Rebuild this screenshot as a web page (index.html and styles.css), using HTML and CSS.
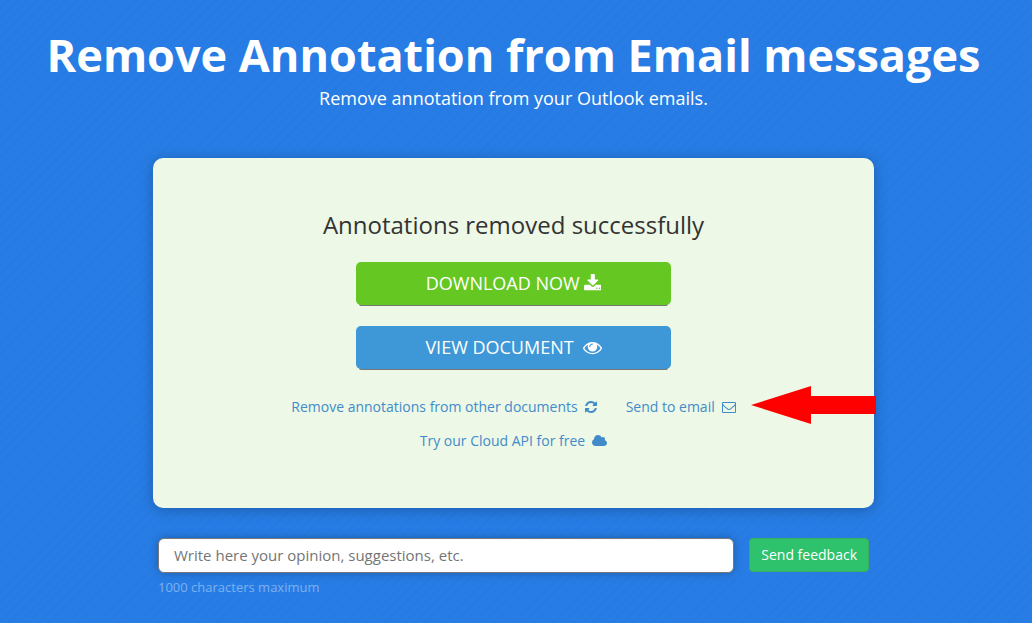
FILE: index.html
```html
<!DOCTYPE html>
<html lang="en">
<head>
<meta charset="utf-8">
<meta name="viewport" content="width=device-width, initial-scale=1">
<title>Remove Annotation from Email messages</title>
<link rel="stylesheet" href="styles.css">
</head>
<body>
<main class="page">
  <header class="intro">
    <h1 class="title">Remove Annotation from Email messages</h1>
    <p class="subtitle">Remove annotation from your Outlook emails.</p>
  </header>
  <section class="panel">
    <h2 class="status">Annotations removed successfully</h2>
    <div class="actions">
      <button class="action download" type="button"><span>DOWNLOAD NOW</span><svg class="icon-download" viewBox="64 0 1664 1792" aria-hidden="true"><path d="M1344 1344q0-26-19-45t-45-19-45 19-19 45 19 45 45 19 45-19 19-45zm256 0q0-26-19-45t-45-19-45 19-19 45 19 45 45 19 45-19 19-45zm128-224v320q0 40-28 68t-68 28h-1472q-40 0-68-28t-28-68v-320q0-40 28-68t68-28h465l135 136q58 56 136 56t136-56l136-136h464q40 0 68 28t28 68zm-325-569q17 41-14 70l-448 448q-18 19-45 19t-45-19l-448-448q-31-29-14-70 17-39 59-39h256v-448q0-26 19-45t45-19h256q26 0 45 19t19 45v448h256q42 0 59 39z"/></svg></button>
      <button class="action view" type="button"><span>VIEW DOCUMENT</span><svg class="icon-eye" viewBox="0 0 1792 1792" aria-hidden="true"><path d="M1664 960q-152-236-381-353 61 104 61 225 0 185-131.500 316.500t-316.500 131.500-316.500-131.500-131.500-316.500q0-121 61-225-229 117-381 353 133 205 333.500 326.500t434.500 121.500 434.500-121.500 333.500-326.500zm-720-384q0-20-14-34t-34-14q-125 0-214.500 89.500t-89.500 214.500q0 20 14 34t34 14 34-14 14-34q0-86 61-147t147-61q20 0 34-14t14-34zm848 384q0 34-20 69-140 230-376.500 368.500t-499.500 138.500-499.500-139-376.500-368q-20-35-20-69t20-69q140-229 376.500-368t499.500-139 499.500 139 376.500 368q20 35 20 69z"/></svg></button>
    </div>
    <nav class="links">
      <a class="link" href="#again">Remove annotations from other documents<svg class="icon-refresh" viewBox="128 0 1536 1792" aria-hidden="true"><path d="M1639 1056q0 5-1 7-64 268-268 434.500t-478 166.500q-146 0-282.500-55t-243.500-157l-129 129q-19 19-45 19t-45-19-19-45v-448q0-26 19-45t45-19h448q26 0 45 19t19 45-19 45l-137 137q71 66 161 102t187 36q134 0 250-65t186-179q11-17 53-117 8-23 30-23h192q13 0 22.500 9.500t9.500 22.500zm25-800v448q0 26-19 45t-45 19h-448q-26 0-45-19t-19-45 19-45l138-138q-148-137-349-137-134 0-250 65t-186 179q-11 17-53 117-8 23-30 23h-199q-13 0-22.500-9.500t-9.500-22.500v-7q65-268 270-434.500t480-166.500q146 0 284 55.500t245 156.500l130-129q19-19 45-19t45 19 19 45z"/></svg></a>
      <a class="link" href="#email">Send to email<svg class="icon-mail" viewBox="0 0 1792 1792" aria-hidden="true"><path d="M1664 1504v-768q-32 36-69 66-268 206-426 338-51 43-83 67t-86.500 48.500-102.500 24.500h-2q-48 0-102.500-24.500t-86.500-48.500-83-67q-158-132-426-338-37-30-69-66v768q0 13 9.500 22.500t22.500 9.500h1472q13 0 22.500-9.500t9.500-22.500zm0-1051v-24.500l-.5-13-3-12.500-5.500-9-9-7.500-14-2.500h-1472q-13 0-22.500 9.500t-9.500 22.500q0 168 147 284 193 152 401 317 6 5 35 29.500t46 37.500 44.500 31.500 50.500 27.500 43 9h2q20 0 43-9t50.500-27.500 44.500-31.500 46-37.500 35-29.500q208-165 401-317 54-43 100.500-115.500t46.500-131.500zm128-37v1088q0 66-47 113t-113 47h-1472q-66 0-113-47t-47-113v-1088q0-66 47-113t113-47h1472q66 0 113 47t47 113z"/></svg></a>
      <a class="link" href="#api">Try our Cloud API for free<svg class="icon-cloud" viewBox="0 0 1920 1792" aria-hidden="true"><path d="M1920 1152q0 159-112.500 271.500t-271.500 112.500h-1088q-185 0-316.500-131.500t-131.500-316.500q0-132 71-241.500t187-163.500q-2-28-2-43 0-212 150-362t362-150q158 0 286.500 88t187.500 230q70-62 166-62 106 0 181 75t75 181q0 75-41 138 129 30 213 134.500t84 239.500z"/></svg></a>
    </nav>
    <svg class="pointer" viewBox="0 0 125 38" aria-hidden="true"><path d="M0 19 60 0V10H125V28H60V38Z"/></svg>
  </section>
  <form class="feedback">
    <div class="field">
      <input class="opinion" type="text" maxlength="1000" placeholder="Write here your opinion, suggestions, etc." aria-label="Your feedback" aria-describedby="limit">
      <span class="hint" id="limit">1000 characters maximum</span>
    </div>
    <button class="send" type="button">Send feedback</button>
  </form>
</main>
</body>
</html>
```
FILE: styles.css
```css
* {
  box-sizing: border-box;
}

body {
  margin: 0;
  min-height: 100vh;
  background: repeating-linear-gradient(135deg, #277de5 0, #277de5 4px, #267ae1 6px, #277de5 7px);
  font-family: "Open Sans", sans-serif;
  font-size: 14px;
  color: #333;
}

.page {
  display: flex;
  flex-direction: column;
  align-items: center;
  padding: 30px 21px 24px 16px;
}

.intro {
  color: #fff;
  text-align: center;
}

.title {
  margin: 0;
  font-size: 45px;
  line-height: 50px;
  font-weight: 700;
}

.subtitle {
  margin: 6px 0 0;
  font-size: 18px;
  line-height: 24px;
}

.panel {
  position: relative;
  display: flex;
  flex-direction: column;
  align-items: center;
  width: 100%;
  max-width: 721px;
  margin-top: 48px;
  padding: 50px 20px 57px;
  border-radius: 10px;
  background: #edf8e7;
  box-shadow: 0 2px 14px rgba(0, 0, 0, 0.25);
}

.status {
  margin: 0;
  font-size: 24px;
  line-height: 34px;
  font-weight: 400;
}

.actions {
  display: flex;
  flex-direction: column;
  gap: 21px;
  width: 100%;
  max-width: 315px;
  margin-top: 20px;
}

.action {
  display: flex;
  align-items: center;
  justify-content: center;
  height: 43px;
  padding: 0;
  border: 0;
  border-radius: 5px;
  box-shadow: 0 4px 0 -3px #777;
  color: #fff;
  font: 18px/23px "Open Sans", sans-serif;
}

.download {
  gap: 4px;
  background: #65c722;
}

.view {
  gap: 9px;
  background: #3e97d6;
}

svg {
  flex: none;
  fill: currentColor;
}

.icon-download,
.icon-eye {
  height: 19px;
}

.links {
  display: flex;
  flex-wrap: wrap;
  justify-content: center;
  gap: 14px 29px;
  max-width: 600px;
  margin-top: 28px;
}

.link {
  display: flex;
  align-items: center;
  gap: 7px;
  color: #428bca;
  line-height: 20px;
  text-decoration: none;
}

.icon-refresh,
.icon-mail,
.icon-cloud {
  height: 14px;
}

.pointer {
  position: absolute;
  right: -2px;
  bottom: 84px;
  width: 125px;
  height: 38px;
  fill: #f00;
}

.feedback {
  display: flex;
  align-items: flex-start;
  gap: 15px;
  width: 100%;
  max-width: 711px;
  margin-top: 30px;
}

.field {
  display: flex;
  flex: 1;
  flex-direction: column;
  gap: 5px;
}

.opinion {
  width: 100%;
  height: 35px;
  padding: 0 15px 2px;
  border: 1px solid #777;
  border-radius: 6px;
  background: #fff;
  box-shadow: 0 0 10px rgba(0, 0, 0, 0.25);
  color: #333;
  font: 15px/20px "Open Sans", sans-serif;
}

.opinion::placeholder {
  color: #757575;
  opacity: 1;
}

.hint {
  color: #7db1ef;
  font-size: 13px;
  line-height: 18px;
}

.send {
  height: 34px;
  padding: 0 11px;
  border: 1px solid #3cae60;
  border-radius: 4px;
  background: #2dc26b;
  color: #fff;
  font: 14px/20px "Open Sans", sans-serif;
}
```
